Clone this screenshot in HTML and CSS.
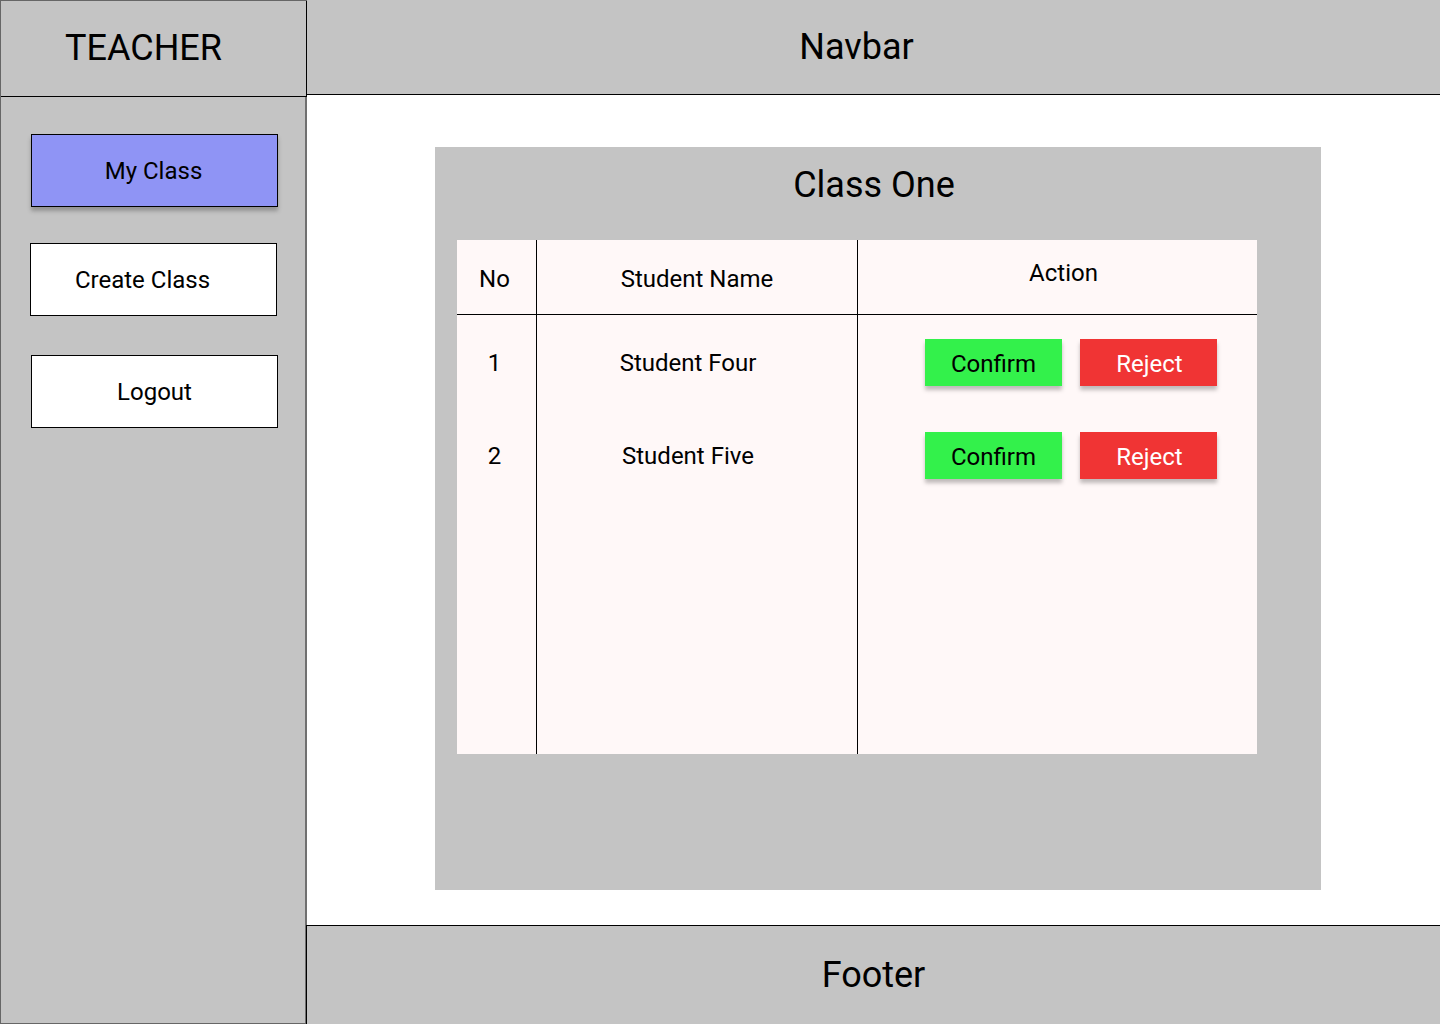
FILE: index.html
```html
<!DOCTYPE html>
<html lang="en">
<head>
<meta charset="utf-8">
<title>Teacher - Class One</title>
<link rel="stylesheet" href="styles.css">
</head>
<body>
<div class="app">
  <aside class="sidebar">
    <div class="brand">TEACHER</div>
    <nav class="side-nav">
      <a class="side-btn side-btn--active">My Class</a>
      <a class="side-btn side-btn--create">Create Class</a>
      <a class="side-btn side-btn--logout">Logout</a>
    </nav>
  </aside>
  <div class="main">
    <header class="navbar">Navbar</header>
    <main class="content">
      <section class="card">
        <h1 class="card-title">Class One</h1>
        <div class="table">
          <div class="cell col-no head head--no">No</div>
          <div class="cell col-name head head--name">Student Name</div>
          <div class="cell col-action head head--action">Action</div>

          <div class="cell col-no row row--no"><span class="line">1</span></div>
          <div class="cell col-name row row--name"><span class="line">Student Four</span></div>
          <div class="cell col-action row row--action">
            <button class="btn btn--confirm">Confirm</button>
            <button class="btn btn--reject">Reject</button>
          </div>

          <div class="cell col-no row row--no"><span class="line">2</span></div>
          <div class="cell col-name row row--name"><span class="line">Student Five</span></div>
          <div class="cell col-action row row--action">
            <button class="btn btn--confirm">Confirm</button>
            <button class="btn btn--reject">Reject</button>
          </div>

          <div class="cell col-no"></div>
          <div class="cell col-name"></div>
          <div class="cell col-action"></div>
        </div>
      </section>
    </main>
    <footer class="footer">Footer</footer>
  </div>
</div>
</body>
</html>
```
FILE: styles.css
```css
* {
  box-sizing: border-box;
}

html, body {
  margin: 0;
  padding: 0;
}

body {
  font-family: Roboto, "Liberation Sans", Arial, sans-serif;
  color: #000;
  background: #fff;
}

.app {
  display: flex;
  width: 1440px;
  height: 1024px;
}

/* Sidebar */
.sidebar {
  width: 307px;
  flex: 0 0 307px;
  display: flex;
  flex-direction: column;
  background: #c4c4c4;
  border: 1px solid #666;
  border-right: none;
}

.brand {
  height: 96px;
  flex: 0 0 96px;
  display: flex;
  align-items: center;
  justify-content: center;
  padding-right: 20px;
  padding-bottom: 2px;
  font-size: 36px;
  border-bottom: 1px solid #000;
  border-right: 1px solid #000;
}

.side-nav {
  flex: 1;
  display: flex;
  flex-direction: column;
  align-items: flex-start;
  padding-top: 37px;
  border-right: 2px solid #707070;
}

.side-btn {
  display: flex;
  align-items: center;
  justify-content: center;
  width: 247px;
  height: 73px;
  margin-left: 30px;
  background: #fff;
  border: 1px solid #000;
  font-size: 24px;
  color: #000;
  text-decoration: none;
}

.side-btn--active {
  background: #8f94f5;
  box-shadow: 0 4px 4px rgba(0, 0, 0, 0.25);
  padding-right: 2px;
}

.side-btn--create {
  margin-left: 29px;
  margin-top: 36px;
  padding-right: 22px;
}

.side-btn--logout {
  margin-top: 39px;
}

/* Main column */
.main {
  flex: 1;
  display: flex;
  flex-direction: column;
  min-width: 0;
}

.navbar {
  height: 95px;
  flex: 0 0 95px;
  display: flex;
  align-items: center;
  justify-content: center;
  padding-right: 34px;
  background: #c4c4c4;
  border-bottom: 1px solid #000;
  font-size: 36px;
}

.content {
  flex: 1;
  background: #fff;
  padding: 52px 119px 0 128px;
}

.card {
  height: 743px;
  background: #c4c4c4;
  padding: 16px 0 0 22px;
}

.card-title {
  margin: 0;
  font-size: 36px;
  font-weight: 400;
  line-height: 44px;
  text-align: center;
  padding-right: 30px;
}

.table {
  margin-top: 33px;
  width: 800px;
  height: 514px;
  background: #fff8f8;
  display: grid;
  grid-template-columns: 80px 321px 399px;
  grid-template-rows: 75px 93px 93px 1fr;
  font-size: 24px;
}

.cell {
  display: flex;
  justify-content: center;
  align-items: flex-start;
}

.col-no,
.col-name {
  border-right: 1px solid #000;
}

.head {
  border-bottom: 1px solid #000;
  line-height: 28px;
  padding-top: 25px;
}

.head--no {
  padding-right: 4px;
}

.head--action {
  padding-top: 19px;
  padding-left: 12px;
}

.row {
  padding-top: 24px;
}

.line {
  line-height: 49px;
}

.row--no {
  padding-right: 4px;
}

.row--name {
  padding-right: 18px;
}

.row--action {
  justify-content: flex-start;
  padding-left: 67px;
  gap: 18px;
}

.btn {
  width: 137px;
  height: 47px;
  border: none;
  padding: 2px 0 0;
  font-family: inherit;
  font-size: 24px;
  box-shadow: 0 4px 4px rgba(0, 0, 0, 0.25);
  cursor: pointer;
}

.btn--confirm {
  background: #33f14b;
  color: #000;
}

.btn--reject {
  background: #f03434;
  color: #fff;
  padding-left: 2px;
}

.footer {
  height: 99px;
  flex: 0 0 99px;
  margin-left: -1px;
  display: flex;
  align-items: center;
  justify-content: center;
  background: #c4c4c4;
  border-top: 1px solid #000;
  border-left: 1px solid #000;
  font-size: 36px;
}
```
